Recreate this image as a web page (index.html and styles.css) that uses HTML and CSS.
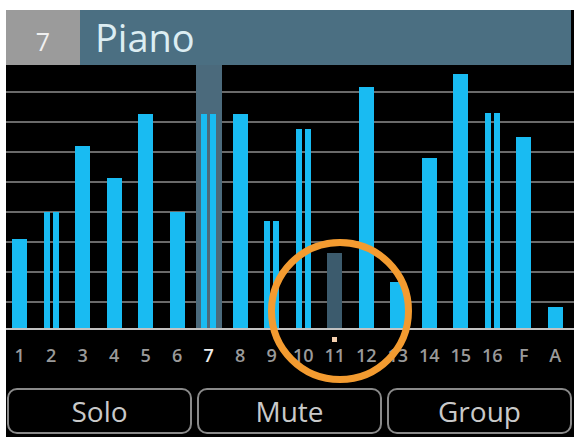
FILE: index.html
```html
<!DOCTYPE html>
<html lang="en">
<head>
    <meta charset="UTF-8">
    <meta name="viewport" content="width=device-width, initial-scale=1.0">
    <title>Piano - Channel 7</title>
    <link rel="stylesheet" href="styles.css">
</head>
<body>
    <div class="screen">
        <div class="header">
            <div class="ch-num">7</div>
            <div class="ch-name">Piano</div>
        </div>

        <!-- level meters, one column per channel -->
        <div class="meter">
            <div class="ch"><div class="bar" style="height: 89px"></div></div>
            <div class="ch"><div class="bar thin" style="height: 116px"></div><div class="bar thin" style="height: 116px"></div></div>
            <div class="ch"><div class="bar" style="height: 182px"></div></div>
            <div class="ch"><div class="bar" style="height: 150px"></div></div>
            <div class="ch"><div class="bar" style="height: 214px"></div></div>
            <div class="ch"><div class="bar" style="height: 116px"></div></div>
            <div class="ch sel"><div class="bar thin" style="height: 214px"></div><div class="bar thin" style="height: 214px"></div></div>
            <div class="ch"><div class="bar" style="height: 214px"></div></div>
            <div class="ch"><div class="bar thin" style="height: 107px"></div><div class="bar thin" style="height: 107px"></div></div>
            <div class="ch"><div class="bar thin" style="height: 199px"></div><div class="bar thin" style="height: 199px"></div></div>
            <div class="ch"><div class="bar muted" style="height: 75px"></div></div>
            <div class="ch"><div class="bar" style="height: 241px"></div></div>
            <div class="ch"><div class="bar" style="height: 46px"></div></div>
            <div class="ch"><div class="bar" style="height: 170px"></div></div>
            <div class="ch"><div class="bar" style="height: 254px"></div></div>
            <div class="ch"><div class="bar thin" style="height: 215px"></div><div class="bar thin" style="height: 215px"></div></div>
            <div class="ch"><div class="bar" style="height: 191px"></div></div>
            <div class="ch"><div class="bar" style="height: 21px"></div></div>
        </div>

        <div class="labels">
            <div class="lbl"><i class="mark"></i><span>1</span></div>
            <div class="lbl"><i class="mark"></i><span>2</span></div>
            <div class="lbl"><i class="mark"></i><span>3</span></div>
            <div class="lbl"><i class="mark"></i><span>4</span></div>
            <div class="lbl"><i class="mark"></i><span>5</span></div>
            <div class="lbl"><i class="mark"></i><span>6</span></div>
            <div class="lbl current"><i class="mark"></i><span>7</span></div>
            <div class="lbl"><i class="mark"></i><span>8</span></div>
            <div class="lbl"><i class="mark"></i><span>9</span></div>
            <div class="lbl"><i class="mark"></i><span>10</span></div>
            <div class="lbl on"><i class="mark"></i><span>11</span></div>
            <div class="lbl"><i class="mark"></i><span>12</span></div>
            <div class="lbl"><i class="mark"></i><span>13</span></div>
            <div class="lbl"><i class="mark"></i><span>14</span></div>
            <div class="lbl"><i class="mark"></i><span>15</span></div>
            <div class="lbl"><i class="mark"></i><span>16</span></div>
            <div class="lbl"><i class="mark"></i><span>F</span></div>
            <div class="lbl"><i class="mark"></i><span>A</span></div>
        </div>

        <div class="buttons">
            <button class="btn">Solo</button>
            <button class="btn">Mute</button>
            <button class="btn">Group</button>
        </div>

        <!-- callout ring around channel 11 -->
        <div class="ring"></div>
    </div>
</body>
</html>
```

FILE: styles.css
```css
body {
    margin: 0;
    background-color: white;
    font-family: "Open Sans", "Noto Sans", sans-serif;
}

.screen {
    position: relative;
    margin: 10px 0 0 6px;
    width: 568px;
    height: 427px;
    background-color: #000;
    overflow: hidden;
}

.header {
    display: flex;
    height: 55px;
    margin-right: 3px;
}

.ch-num {
    width: 74px;
    background-color: #9b9b9b;
    color: #f0f0f0;
    font-size: 25px;
    line-height: 62px;
    text-align: center;
}

.ch-name {
    flex: 1;
    background-color: #4b6f82;
    color: #dcedf2;
    font-size: 38px;
    line-height: 55px;
    padding-left: 15px;
}

.meter {
    display: grid;
    grid-template-columns: repeat(18, 31.5px);
    margin-left: -2px;
    height: 263px;
    border-bottom: 2px solid #c2c2c2;
    background-image: repeating-linear-gradient(to top, transparent 0 25px, #6a6a6a 25px 27px, transparent 27px 30px);
}

.ch {
    display: flex;
    justify-content: center;
    align-items: flex-end;
    gap: 3px;
}

.ch.sel {
    margin: 0 2.75px;
    background-color: #4b6a7c;
}

.bar {
    width: 15px;
    background-color: #19bbf2;
}

.bar.thin {
    width: 6px;
}

.bar.muted {
    background-color: #3c5b6d;
}

.labels {
    display: grid;
    grid-template-columns: repeat(18, 31.5px);
    margin-left: -2px;
    height: 58px;
}

.lbl {
    display: flex;
    flex-direction: column;
    align-items: center;
    padding-top: 7px;
    color: #9a9a9a;
    font-size: 18px;
    font-weight: 600;
    line-height: 26px;
}

.lbl.current {
    color: #ececec;
}

.mark {
    width: 5px;
    height: 5px;
}

.lbl.on .mark {
    background-color: #f4cfae;
}

.buttons {
    display: flex;
    gap: 5px;
    padding: 0 2px 0 1px;
}

.btn {
    flex: 1;
    height: 46px;
    background-color: transparent;
    border: 2px solid #8a8a8a;
    border-radius: 10px;
    color: #c9c9c9;
    font-family: inherit;
    font-size: 28px;
    line-height: 40px;
    padding: 0;
}

.ring {
    position: absolute;
    left: 262px;
    top: 229px;
    width: 144px;
    height: 144px;
    box-sizing: border-box;
    border: 7px solid #f39b30;
    border-radius: 50%;
}
```
